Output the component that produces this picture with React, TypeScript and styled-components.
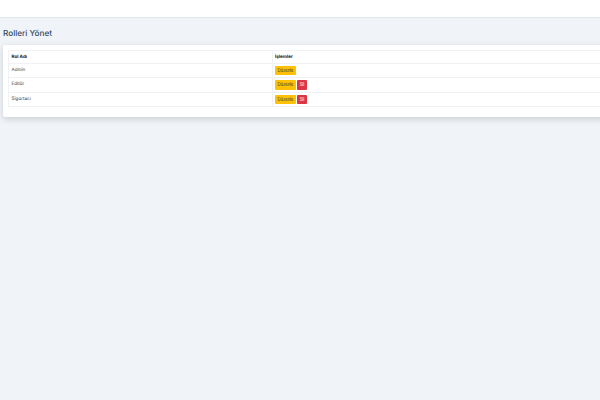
import React from "react";
import styled, { createGlobalStyle } from "styled-components";

const GlobalStyle = createGlobalStyle`
  html, body {
    margin: 0;
    height: 100%;
    overflow: hidden;
    background: #f0f4f8;
    font-family: "Inter", "Liberation Sans", sans-serif;
    text-rendering: geometricPrecision;
  }
`;

const Page = styled.div`
  width: 600px;
  height: 400px;
  overflow: hidden;
  background: #f0f4f8;
`;

const TopBar = styled.div`
  height: 17px;
  background: #ffffff;
  box-shadow: 0 1px 1px rgba(0, 0, 0, 0.05);
`;

const Main = styled.main`
  padding: 10.5px 0 0 3px;
`;

const Heading = styled.h1`
  margin: 0 0 6.5px;
  font-size: 8.2px;
  line-height: 11px;
  font-weight: 500;
  color: #34495e;
`;

const Card = styled.section`
  width: 640px;
  padding: 4.5px 5px 10px;
  background: #ffffff;
  border-radius: 2px;
  box-shadow: 0 2px 6px rgba(0, 0, 0, 0.16);
  box-sizing: border-box;
`;

const Table = styled.table`
  width: 100%;
  border-collapse: collapse;
  font-size: 4.6px;
  table-layout: fixed;
`;

const Th = styled.th<{ $width?: number }>`
  width: ${(p) => (p.$width ? `${p.$width}px` : "auto")};
  height: 11px;
  padding: 1px 2.5px 0;
  border: 0.5px solid #f1f2f3;
  text-align: left;
  font-weight: 700;
  color: #111111;
`;

const Td = styled.td`
  height: 13.5px;
  padding: 0 2.5px;
  border: 0.5px solid #f1f2f3;
  color: #333333;
`;

const NameTd = styled(Td)`
  padding-bottom: 0.5px;
  height: 13px;
`;

const Actions = styled.div`
  display: flex;
  gap: 1px;
  align-items: center;
`;

const Button = styled.button<{ $variant: "edit" | "remove" }>`
  height: 9.5px;
  padding: 0;
  border: 0;
  border-radius: 1px;
  font-family: inherit;
  font-size: 4.2px;
  background: ${(p) => (p.$variant === "edit" ? "#ffc107" : "#dc3545")};
  color: ${(p) => (p.$variant === "edit" ? "#333333" : "#ffffff")};
`;

const RemoveButton = styled(Button)`
  width: 10px;
`;

const EditButton = styled(Button)`
  width: 21px;
`;

const roles = [
  { name: "Admin", removable: false },
  { name: "Editör", removable: true },
  { name: "Sigortacı", removable: true },
];

export default function App() {
  return (
    <Page>
      <GlobalStyle />
      <TopBar />
      <Main>
        <Heading>Rolleri Yönet</Heading>
        <Card>
          <Table>
            <thead>
              <tr>
                <Th $width={257.5}>Rol Adı</Th>
                <Th>İşlemler</Th>
              </tr>
            </thead>
            <tbody>
              {roles.map((role) => (
                <tr key={role.name}>
                  <NameTd>{role.name}</NameTd>
                  <Td>
                    <Actions>
                      <EditButton $variant="edit">Düzenle</EditButton>
                      {role.removable && <RemoveButton $variant="remove">Sil</RemoveButton>}
                    </Actions>
                  </Td>
                </tr>
              ))}
            </tbody>
          </Table>
        </Card>
      </Main>
    </Page>
  );
}
